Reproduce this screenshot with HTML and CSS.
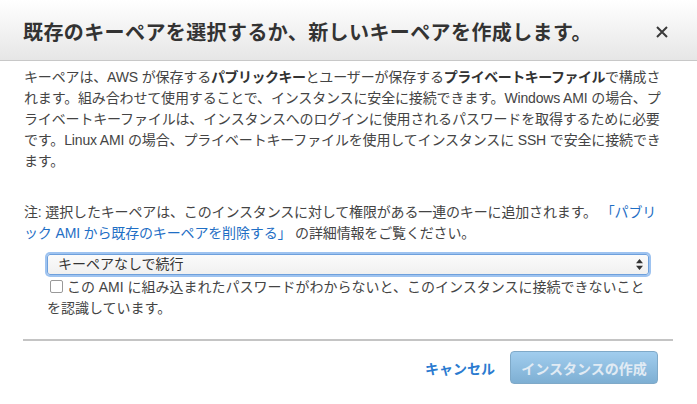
FILE: index.html
```html
<!DOCTYPE html>
<html lang="ja">
<head>
<meta charset="utf-8">
<link rel="stylesheet" href="styles.css">
</head>
<body>
<div class="modal">
  <div class="modal-header">
    <h1 class="title">既存のキーペアを選択するか、新しいキーペアを作成します。</h1>
    <button class="close" aria-label="閉じる">
      <svg width="12" height="12" viewBox="0 0 12 12"><path d="M1 1 L11 11 M11 1 L1 11" stroke="#3a3a3a" stroke-width="2" fill="none"/></svg>
    </button>
  </div>
  <div class="modal-body">
    <p class="desc">キーペアは、AWS が保存する<b>パブリックキー</b>とユーザーが保存する<b>プライベートキーファイル</b>で構成されます。組み合わせて使用することで、インスタンスに安全に接続できます。Windows AMI の場合、プライベートキーファイルは、インスタンスへのログインに使用されるパスワードを取得するために必要です。Linux AMI の場合、プライベートキーファイルを使用してインスタンスに SSH で安全に接続できます。</p>
    <p class="note">注: 選択したキーペアは、このインスタンスに対して権限がある一連のキーに追加されます。 <a class="link" href="#">「パブリック AMI から既存のキーペアを削除する」</a> の詳細情報をご覧ください。</p>
    <div class="choice">
      <div class="select">
        <span class="select-text">キーペアなしで続行</span>
        <svg class="arrows" width="7" height="11" viewBox="0 0 7 11"><path d="M3.5 0 L7 4.3 L0 4.3 Z M3.5 11 L7 6.7 L0 6.7 Z" fill="#333"/></svg>
      </div>
      <label class="ack"><span class="checkbox"></span> この AMI に組み込まれたパスワードがわからないと、このインスタンスに接続できないことを認識しています。</label>
    </div>
    <hr class="divider">
    <div class="footer">
      <a class="cancel" href="#">キャンセル</a>
      <button class="primary" disabled>インスタンスの作成</button>
    </div>
  </div>
</div>
</body>
</html>
```
FILE: styles.css
```css
html, body {
  margin: 0;
  padding: 0;
  background: #fff;
}
body {
  font-family: "Liberation Sans", "Noto Sans CJK JP", sans-serif;
  color: #444;
  font-size: 14px;
}
.modal {
  width: 697px;
  height: 404px;
  overflow: hidden;
}
.modal-header {
  height: 61px;
  box-sizing: border-box;
  border-bottom: 1px solid #c8c8c8;
  background: linear-gradient(#ffffff, #e6e6e6);
  display: flex;
  align-items: center;
  justify-content: space-between;
  padding: 3px 29px 0 23px;
}
.title {
  margin: 0;
  font-size: 20px;
  font-weight: bold;
  color: #333;
  font-family: "Noto Sans CJK JP", sans-serif;
  letter-spacing: 0.4px;
}
.close {
  border: 0;
  background: none;
  padding: 0;
  display: flex;
}
.modal-body {
  padding: 6px 24px 0 24px;
}
.desc, .note {
  margin: 0;
  line-height: 21px;
  letter-spacing: -0.15px;
}
.desc b {
  color: #333;
  letter-spacing: -0.5px;
}
.note {
  margin: 30px 10px 0 0;
  line-break: anywhere;
}
.link {
  color: #1f6fc5;
  text-decoration: none;
}
.choice {
  margin: 10px 24px 0 23px;
}
.select {
  height: 21px;
  box-sizing: border-box;
  border: 1px solid #6ea0dc;
  box-shadow: 0 0 0 2px #9ec3f0;
  border-radius: 3px;
  background: linear-gradient(#fbfbfb, #f0f0f0);
  display: flex;
  align-items: center;
  justify-content: space-between;
  padding: 0 5px 0 10px;
  color: #333;
  line-height: 19px;
}
.arrows {
  display: block;
}
.ack {
  display: block;
  margin-top: 2px;
  line-height: 21px;
  color: #444;
}
.checkbox {
  display: inline-block;
  width: 11px;
  height: 11px;
  border: 1px solid #999;
  border-radius: 2px;
  background: #fff;
  margin-left: 3px;
  vertical-align: -1px;
}
.divider {
  margin: 20px 0 0 -1px;
  border: 0;
  border-top: 2px solid #c4c4c4;
}
.footer {
  display: flex;
  justify-content: flex-end;
  align-items: center;
  gap: 15px;
  padding: 10px 15px 0 0;
}
.cancel {
  color: #2b7bd0;
  font-weight: bold;
  text-decoration: none;
}
.primary {
  height: 33px;
  width: 148px;
  box-sizing: border-box;
  border: 1px solid #7fa9c8;
  border-radius: 4px;
  background: linear-gradient(#a1cdee, #7eafd3);
  color: #e1ebf4;
  font-family: "Liberation Sans", "Noto Sans CJK JP", sans-serif;
  font-size: 14px;
  font-weight: bold;
  padding: 0;
}
```
